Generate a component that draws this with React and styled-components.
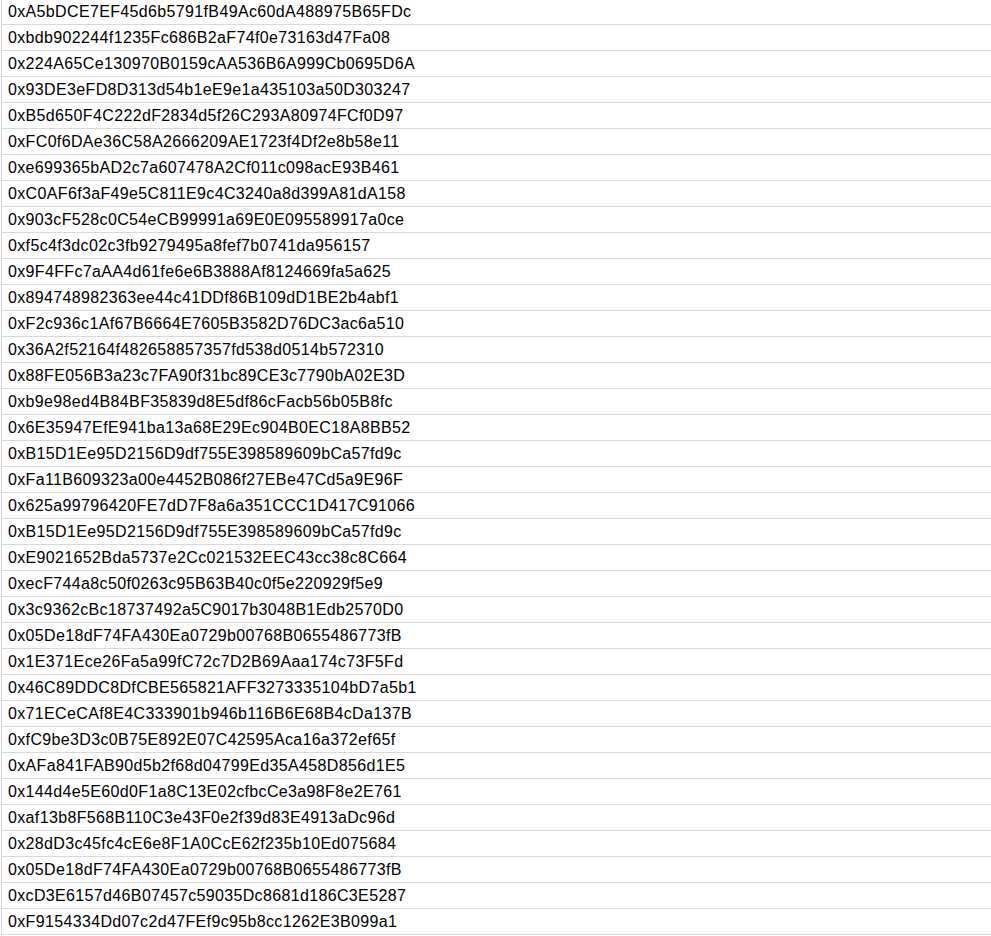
import styled, { createGlobalStyle } from "styled-components";

const Global = createGlobalStyle`
  html, body {
    margin: 0;
    padding: 0;
    background: #ffffff;
    overflow: hidden;
  }
`

const Sheet = styled.div`
  margin-top: -1px;
  margin-left: 1px;
  border-left: 1px solid #d4d4d4;
  width: 990px;
`

const Row = styled.div`
  height: 26px;
  box-sizing: border-box;
  border-bottom: 1px solid #d9d9d9;
  display: flex;
  align-items: center;
  padding-left: 6px;
  padding-top: 1px;
  font-family: "Liberation Sans", Arial, sans-serif;
  font-size: 16px;
  letter-spacing: 0.35px;
  color: #000;
  white-space: nowrap;
`

const addresses = [
  "0xA5bDCE7EF45d6b5791fB49Ac60dA488975B65FDc",
  "0xbdb902244f1235Fc686B2aF74f0e73163d47Fa08",
  "0x224A65Ce130970B0159cAA536B6A999Cb0695D6A",
  "0x93DE3eFD8D313d54b1eE9e1a435103a50D303247",
  "0xB5d650F4C222dF2834d5f26C293A80974FCf0D97",
  "0xFC0f6DAe36C58A2666209AE1723f4Df2e8b58e11",
  "0xe699365bAD2c7a607478A2Cf011c098acE93B461",
  "0xC0AF6f3aF49e5C811E9c4C3240a8d399A81dA158",
  "0x903cF528c0C54eCB99991a69E0E095589917a0ce",
  "0xf5c4f3dc02c3fb9279495a8fef7b0741da956157",
  "0x9F4FFc7aAA4d61fe6e6B3888Af8124669fa5a625",
  "0x894748982363ee44c41DDf86B109dD1BE2b4abf1",
  "0xF2c936c1Af67B6664E7605B3582D76DC3ac6a510",
  "0x36A2f52164f482658857357fd538d0514b572310",
  "0x88FE056B3a23c7FA90f31bc89CE3c7790bA02E3D",
  "0xb9e98ed4B84BF35839d8E5df86cFacb56b05B8fc",
  "0x6E35947EfE941ba13a68E29Ec904B0EC18A8BB52",
  "0xB15D1Ee95D2156D9df755E398589609bCa57fd9c",
  "0xFa11B609323a00e4452B086f27EBe47Cd5a9E96F",
  "0x625a99796420FE7dD7F8a6a351CCC1D417C91066",
  "0xB15D1Ee95D2156D9df755E398589609bCa57fd9c",
  "0xE9021652Bda5737e2Cc021532EEC43cc38c8C664",
  "0xecF744a8c50f0263c95B63B40c0f5e220929f5e9",
  "0x3c9362cBc18737492a5C9017b3048B1Edb2570D0",
  "0x05De18dF74FA430Ea0729b00768B0655486773fB",
  "0x1E371Ece26Fa5a99fC72c7D2B69Aaa174c73F5Fd",
  "0x46C89DDC8DfCBE565821AFF3273335104bD7a5b1",
  "0x71ECeCAf8E4C333901b946b116B6E68B4cDa137B",
  "0xfC9be3D3c0B75E892E07C42595Aca16a372ef65f",
  "0xAFa841FAB90d5b2f68d04799Ed35A458D856d1E5",
  "0x144d4e5E60d0F1a8C13E02cfbcCe3a98F8e2E761",
  "0xaf13b8F568B110C3e43F0e2f39d83E4913aDc96d",
  "0x28dD3c45fc4cE6e8F1A0CcE62f235b10Ed075684",
  "0x05De18dF74FA430Ea0729b00768B0655486773fB",
  "0xcD3E6157d46B07457c59035Dc8681d186C3E5287",
  "0xF9154334Dd07c2d47FEf9c95b8cc1262E3B099a1",
]

export default function App() {
  return (
    <>
      <Global />
      <Sheet>
        {addresses.map((a, i) => (
          <Row key={i}>{a}</Row>
        ))}
      </Sheet>
    </>
  );
}
